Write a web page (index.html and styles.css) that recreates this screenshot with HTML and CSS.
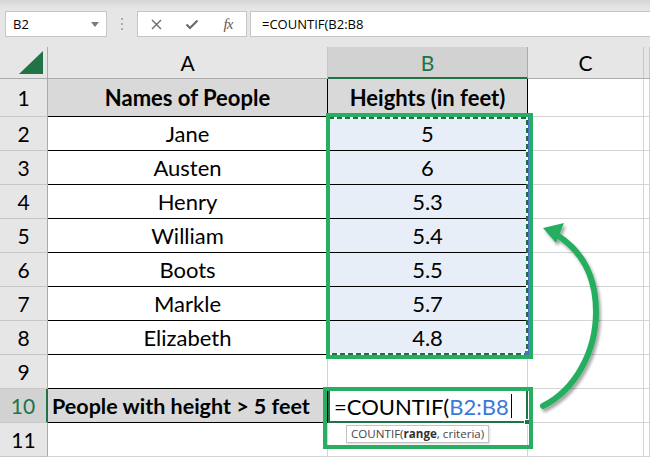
FILE: index.html
```html
<!DOCTYPE html>
<html>
<head>
<meta charset="utf-8">
<link rel="stylesheet" href="styles.css">
</head>
<body>
<div class="page">
  <div class="toolbar">
    <div class="namebox"><span>B2</span><span class="caret"></span></div>
    <div class="dots"><i></i><i></i><i></i></div>
    <div class="fbtns">
      <span class="slot"><svg width="11" height="11" viewBox="0 0 11 11"><path d="M1 1L10 10M10 1L1 10" stroke="#6b6b6b" stroke-width="1.4" fill="none"/></svg></span>
      <span class="slot"><svg width="14" height="11" viewBox="0 0 14 11"><path d="M1.5 5.5L5 9L12.5 1.5" stroke="#6b6b6b" stroke-width="2.2" fill="none"/></svg></span>
      <span class="slot fx">fx</span>
    </div>
    <div class="finput">=COUNTIF(B2:B8</div>
  </div>

  <div class="grid">
    <div class="corner"><span class="tri"></span></div>
    <div class="ch">A</div>
    <div class="ch sel">B</div>
    <div class="ch">C</div>
    <div class="ch"></div>

    <div class="rh">1</div>
    <div class="c tb hd">Names of People</div>
    <div class="c tb hd">Heights (in feet)</div>
    <div class="c"></div><div class="c"></div>

    <div class="rh">2</div>
    <div class="c tb">Jane</div>
    <div class="c tb rng">5</div>
    <div class="c"></div><div class="c"></div>

    <div class="rh">3</div>
    <div class="c tb">Austen</div>
    <div class="c tb rng">6</div>
    <div class="c"></div><div class="c"></div>

    <div class="rh">4</div>
    <div class="c tb">Henry</div>
    <div class="c tb rng">5.3</div>
    <div class="c"></div><div class="c"></div>

    <div class="rh">5</div>
    <div class="c tb">William</div>
    <div class="c tb rng">5.4</div>
    <div class="c"></div><div class="c"></div>

    <div class="rh">6</div>
    <div class="c tb">Boots</div>
    <div class="c tb rng">5.5</div>
    <div class="c"></div><div class="c"></div>

    <div class="rh">7</div>
    <div class="c tb">Markle</div>
    <div class="c tb rng">5.7</div>
    <div class="c"></div><div class="c"></div>

    <div class="rh">8</div>
    <div class="c tb">Elizabeth</div>
    <div class="c tb rng">4.8</div>
    <div class="c"></div><div class="c"></div>

    <div class="rh">9</div>
    <div class="c bb"></div>
    <div class="c"></div>
    <div class="c"></div><div class="c"></div>

    <div class="rh act">10</div>
    <div class="c tb hd lbl">People with height &gt; 5 feet</div>
    <div class="c edit"><span class="fn">=COUNTIF(</span><span class="ref">B2:B8</span><span class="cursor"></span><span class="handle"></span></div>
    <div class="c"></div><div class="c"></div>

    <div class="rh">11</div>
    <div class="c"></div>
    <div class="c"></div>
    <div class="c"></div><div class="c"></div>
  </div>

  <div class="tip">COUNTIF(<b>range</b>, criteria)</div>

  <svg class="notes" width="650" height="457" viewBox="0 0 650 457">
    <defs>
      <filter id="sh" x="-20%" y="-20%" width="160%" height="160%">
        <feDropShadow dx="2" dy="3" stdDeviation="1.6" flood-color="#000" flood-opacity="0.35"/>
      </filter>
    </defs>
    <rect x="329" y="118" width="198" height="236" fill="none" stroke="#ffffff" stroke-width="2"/>
    <rect x="329" y="118" width="198" height="236" fill="none" stroke="#1f6f43" stroke-width="2" stroke-dasharray="5 3"/>
    <line x1="528.5" y1="116" x2="528.5" y2="355" stroke="#4472c4" stroke-width="1"/>
    <rect x="525" y="351" width="5" height="5" fill="#4472c4"/>
    <rect x="328" y="115" width="203" height="242" fill="none" stroke="#27ae60" stroke-width="4"/>
    <rect x="325" y="389" width="206" height="58" fill="none" stroke="#27ae60" stroke-width="4"/>
    <g filter="url(#sh)">
      <path d="M543 406 C575 390 596 352 596 312 C596 277 582 251 557 235" fill="none" stroke="#27ae60" stroke-width="6" stroke-linecap="round"/>
      <polygon points="543,228 564,223 556,243" fill="#27ae60"/>
    </g>
  </svg>
</div>
</body>
</html>
```

FILE: styles.css
```css
* { box-sizing: border-box; margin: 0; padding: 0; }
html, body { width: 650px; height: 457px; overflow: hidden; }
body { background: #ffffff; font-family: Lato, "Liberation Sans", sans-serif; color: #000; }

.page { position: relative; width: 650px; height: 457px; }

.toolbar {
  height: 47px;
  display: flex;
  align-items: flex-start;
  padding: 11px 0 0 5px;
  background: linear-gradient(#d6d6d6 0px, #e6e6e6 9px, #e6e6e6 100%);
  font-family: "Open Sans", "Liberation Sans", sans-serif;
  font-size: 13px;
}
.namebox {
  width: 102px; height: 26px;
  background: #fff; border: 1px solid #c6c6c6;
  display: flex; align-items: center; justify-content: space-between;
  padding: 0 7px 0 7px;
}
.caret { width: 0; height: 0; border-left: 4px solid transparent; border-right: 4px solid transparent; border-top: 5px solid #7a7a7a; }
.dots { width: 10px; height: 26px; margin: 0 10px; display: flex; flex-direction: column; align-items: center; justify-content: center; gap: 3px; }
.dots i { display: block; width: 2px; height: 2px; background: #ababab; }
.fbtns {
  width: 110px; height: 26px;
  background: #fff; border: 1px solid #c6c6c6;
  display: flex; align-items: center;
}
.slot { width: 36px; height: 24px; display: flex; align-items: center; justify-content: center; }
.fx { font-family: "Liberation Serif", serif; font-style: italic; font-size: 15px; color: #5a5a5a; letter-spacing: -1px; }
.finput {
  flex: 1; height: 26px; margin-left: 3px;
  background: #fff; border: 1px solid #c6c6c6; border-right: none;
  display: flex; align-items: center; padding-left: 11px;
}

.grid {
  display: grid;
  grid-template-columns: 48px 280px 200px 116px 1fr;
  grid-template-rows: 32px 38px repeat(10, 34px);
  font-size: 20px;
}
.corner { background: #e6e6e6; border-right: 1px solid #ababab; border-bottom: 1px solid #ababab; position: relative; }
.tri { position: absolute; right: 4px; bottom: 4px; width: 0; height: 0; border-left: 24px solid transparent; border-bottom: 23px solid #217346; }
.ch { background: #e6e6e6; border-right: 1px solid #c6c6c6; border-bottom: 1px solid #ababab; display: flex; align-items: center; justify-content: center; font-size: 21px; }
.ch.sel { background: #d2d2d2; color: #217346; border-right-color: #ababab; border-bottom: 2px solid #217346; }
.rh { background: #e6e6e6; border-right: 1px solid #ababab; border-bottom: 1px solid #c6c6c6; display: flex; align-items: center; justify-content: center; font-size: 21px; }
.rh.act { background: #d2d2d2; color: #217346; border-right: 2px solid #217346; }

.c { border-right: 1px solid #d4d4d4; border-bottom: 1px solid #d4d4d4; display: flex; align-items: center; justify-content: center; white-space: nowrap; font-size: 22px; }
.c.tb { border-right-color: #000; border-bottom-color: #000; }
.c.bb { border-bottom-color: #000; }
.c.hd { background: #d9d9d9; font-weight: bold; }
.c.rng { background: #e8eef7; }
.c.lbl { justify-content: flex-start; padding-left: 4px; font-size: 21.5px; }
.c.edit {
  position: relative;
  justify-content: flex-start; padding-left: 4px;
  border: 2px solid #217346; font-size: 22px;
}
.ref { color: #3c78d8; }
.cursor { display: inline-block; width: 1px; height: 24px; background: #000; margin-left: 2px; }
.handle { position: absolute; right: -4px; bottom: -4px; width: 6px; height: 6px; background: #217346; border: 1px solid #fff; }

.tip {
  position: absolute; left: 346px; top: 425px;
  height: 18px; padding: 0 4px;
  background: #fff; border: 1px solid #c3c3c3;
  font-family: "Open Sans", "Liberation Sans", sans-serif; font-size: 11.6px; line-height: 16px; color: #444;
  box-shadow: 1px 1px 2px rgba(0,0,0,0.15);
}
.tip b { font-weight: bold; color: #333; }

.notes { position: absolute; left: 0; top: 0; pointer-events: none; }
```
